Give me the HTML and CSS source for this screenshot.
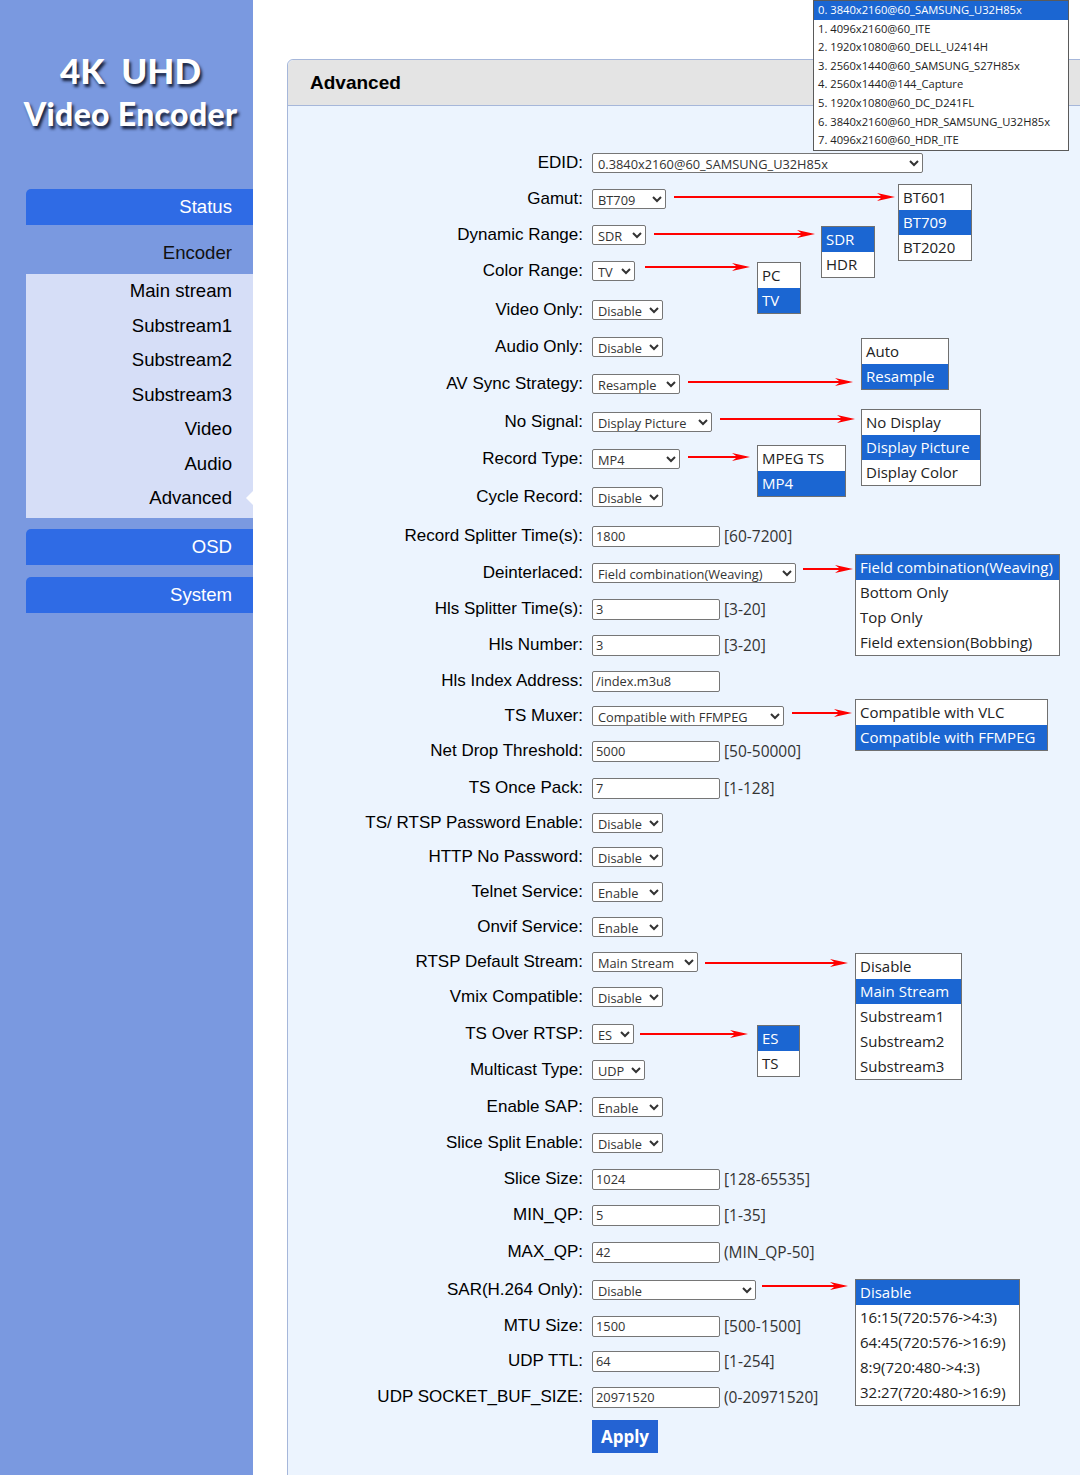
FILE: index.html
```html
<!DOCTYPE html>
<html lang="en">
  <head>
    <meta charset="UTF-8" />
    <meta name="viewport" content="width=device-width, initial-scale=1.0" />
    <title>4K UHD Video Encoder - Advanced</title>
    <link rel="stylesheet" href="styles.css">
  </head>

  <body>
    <aside class="sidebar">
      <div class="logo">
        <div class="logo-top">4K&nbsp;&nbsp;UHD</div>
        <div class="logo-bottom">Video Encoder</div>
      </div>
      <nav class="menu">
        <a class="menu-btn" href="#">Status</a>
        <a class="menu-group" href="#">Encoder</a>
        <ul class="submenu">
          <li>Main stream</li>
          <li>Substream1</li>
          <li>Substream2</li>
          <li>Substream3</li>
          <li>Video</li>
          <li>Audio</li>
          <li class="current">Advanced</li>
        </ul>
        <a class="menu-btn osd" href="#">OSD</a>
        <a class="menu-btn system" href="#">System</a>
      </nav>
    </aside>

    <main class="content">
      <section class="panel">
        <h2 class="panel-title">Advanced</h2>
        <form class="panel-body" onsubmit="return false">
          <div class="row">
            <label>EDID:</label>
            <select class="w331">
              <option selected>0.3840x2160@60_SAMSUNG_U32H85x</option>
              <option>1.4096x2160@60_ITE</option>
            </select>
          </div>
          <div class="row">
            <label>Gamut:</label>
            <select class="w74"><option>BT601</option><option selected>BT709</option><option>BT2020</option></select>
            <span class="arrow a-gamut"></span>
            <ul class="optlist l-gamut"><li>BT601</li><li class="sel">BT709</li><li>BT2020</li></ul>
          </div>
          <div class="row">
            <label>Dynamic Range:</label>
            <select class="w54"><option selected>SDR</option><option>HDR</option></select>
            <span class="arrow a-range"></span>
            <ul class="optlist l-range"><li class="sel">SDR</li><li>HDR</li></ul>
          </div>
          <div class="row p39">
            <label>Color Range:</label>
            <select class="w43"><option>PC</option><option selected>TV</option></select>
            <span class="arrow a-color"></span>
            <ul class="optlist l-color"><li>PC</li><li class="sel">TV</li></ul>
          </div>
          <div class="row p37">
            <label>Video Only:</label>
            <select class="w71"><option selected>Disable</option><option>Enable</option></select>
          </div>
          <div class="row p37">
            <label>Audio Only:</label>
            <select class="w71"><option selected>Disable</option><option>Enable</option></select>
          </div>
          <div class="row p38">
            <label>AV Sync Strategy:</label>
            <select class="w88"><option>Auto</option><option selected>Resample</option></select>
            <span class="arrow a-sync"></span>
            <ul class="optlist l-sync"><li>Auto</li><li class="sel">Resample</li></ul>
          </div>
          <div class="row p37">
            <label>No Signal:</label>
            <select class="w120"><option>No Display</option><option selected>Display Picture</option><option>Display Color</option></select>
            <span class="arrow a-signal"></span>
            <ul class="optlist l-signal"><li>No Display</li><li class="sel">Display Picture</li><li>Display Color</li></ul>
          </div>
          <div class="row p38">
            <label>Record Type:</label>
            <select class="w88"><option>MPEG TS</option><option selected>MP4</option></select>
            <span class="arrow a-record"></span>
            <ul class="optlist l-record"><li>MPEG TS</li><li class="sel">MP4</li></ul>
          </div>
          <div class="row p39">
            <label>Cycle Record:</label>
            <select class="w71"><option selected>Disable</option><option>Enable</option></select>
          </div>
          <div class="row p37">
            <label>Record Splitter Time(s):</label>
            <input type="text" value="1800" />
            <span class="hint">[60-7200]</span>
          </div>
          <div class="row">
            <label>Deinterlaced:</label>
            <select class="w204">
              <option selected>Field combination(Weaving)</option>
              <option>Bottom Only</option>
              <option>Top Only</option>
              <option>Field extension(Bobbing)</option>
            </select>
            <span class="arrow a-deint"></span>
            <ul class="optlist l-deint">
              <li class="sel">Field combination(Weaving)</li>
              <li>Bottom Only</li>
              <li>Top Only</li>
              <li>Field extension(Bobbing)</li>
            </ul>
          </div>
          <div class="row">
            <label>Hls Splitter Time(s):</label>
            <input type="text" value="3" />
            <span class="hint">[3-20]</span>
          </div>
          <div class="row">
            <label>Hls Number:</label>
            <input type="text" value="3" />
            <span class="hint">[3-20]</span>
          </div>
          <div class="row p35">
            <label>Hls Index Address:</label>
            <input type="text" value="/index.m3u8" />
          </div>
          <div class="row p35">
            <label>TS Muxer:</label>
            <select class="w192"><option>Compatible with VLC</option><option selected>Compatible with FFMPEG</option></select>
            <span class="arrow a-muxer"></span>
            <ul class="optlist l-muxer"><li>Compatible with VLC</li><li class="sel">Compatible with FFMPEG</li></ul>
          </div>
          <div class="row p37">
            <label>Net Drop Threshold:</label>
            <input type="text" value="5000" />
            <span class="hint">[50-50000]</span>
          </div>
          <div class="row p35">
            <label>TS Once Pack:</label>
            <input type="text" value="7" />
            <span class="hint">[1-128]</span>
          </div>
          <div class="row p34">
            <label>TS/ RTSP Password Enable:</label>
            <select class="w71"><option selected>Disable</option><option>Enable</option></select>
          </div>
          <div class="row p35">
            <label>HTTP No Password:</label>
            <select class="w71"><option selected>Disable</option><option>Enable</option></select>
          </div>
          <div class="row p35">
            <label>Telnet Service:</label>
            <select class="w71"><option>Disable</option><option selected>Enable</option></select>
          </div>
          <div class="row p35">
            <label>Onvif Service:</label>
            <select class="w71"><option>Disable</option><option selected>Enable</option></select>
          </div>
          <div class="row p35">
            <label>RTSP Default Stream:</label>
            <select class="w106">
              <option>Disable</option>
              <option selected>Main Stream</option>
              <option>Substream1</option>
              <option>Substream2</option>
              <option>Substream3</option>
            </select>
            <span class="arrow a-stream"></span>
            <ul class="optlist l-stream">
              <li>Disable</li>
              <li class="sel">Main Stream</li>
              <li>Substream1</li>
              <li>Substream2</li>
              <li>Substream3</li>
            </ul>
          </div>
          <div class="row p37">
            <label>Vmix Compatible:</label>
            <select class="w71"><option selected>Disable</option><option>Enable</option></select>
          </div>
          <div class="row">
            <label>TS Over RTSP:</label>
            <select class="w42"><option selected>ES</option><option>TS</option></select>
            <span class="arrow a-rtsp"></span>
            <ul class="optlist l-rtsp"><li class="sel">ES</li><li>TS</li></ul>
          </div>
          <div class="row p37">
            <label>Multicast Type:</label>
            <select class="w53"><option selected>UDP</option><option>RTP</option></select>
          </div>
          <div class="row">
            <label>Enable SAP:</label>
            <select class="w71"><option>Disable</option><option selected>Enable</option></select>
          </div>
          <div class="row">
            <label>Slice Split Enable:</label>
            <select class="w71"><option selected>Disable</option><option>Enable</option></select>
          </div>
          <div class="row">
            <label>Slice Size:</label>
            <input type="text" value="1024" />
            <span class="hint">[128-65535]</span>
          </div>
          <div class="row p37">
            <label>MIN_QP:</label>
            <input type="text" value="5" />
            <span class="hint">[1-35]</span>
          </div>
          <div class="row p38">
            <label>MAX_QP:</label>
            <input type="text" value="42" />
            <span class="hint">(MIN_QP-50]</span>
          </div>
          <div class="row">
            <label>SAR(H.264 Only):</label>
            <select class="w164">
              <option selected>Disable</option>
              <option>16:15(720:576-&gt;4:3)</option>
              <option>64:45(720:576-&gt;16:9)</option>
              <option>8:9(720:480-&gt;4:3)</option>
              <option>32:27(720:480-&gt;16:9)</option>
            </select>
            <span class="arrow a-sar"></span>
            <ul class="optlist l-sar">
              <li class="sel">Disable</li>
              <li>16:15(720:576-&gt;4:3)</li>
              <li>64:45(720:576-&gt;16:9)</li>
              <li>8:9(720:480-&gt;4:3)</li>
              <li>32:27(720:480-&gt;16:9)</li>
            </ul>
          </div>
          <div class="row p35">
            <label>MTU Size:</label>
            <input type="text" value="1500" />
            <span class="hint">[500-1500]</span>
          </div>
          <div class="row">
            <label>UDP TTL:</label>
            <input type="text" value="64" />
            <span class="hint">[1-254]</span>
          </div>
          <div class="row p34">
            <label>UDP SOCKET_BUF_SIZE:</label>
            <input type="text" value="20971520" />
            <span class="hint">(0-20971520]</span>
          </div>
          <div class="row actions">
            <label></label>
            <button class="apply" type="submit">Apply</button>
          </div>
        </form>
      </section>

      <!-- EDID list, opened -->
      <ul class="optlist edid-list">
        <li class="sel">0. 3840x2160@60_SAMSUNG_U32H85x</li>
        <li>1. 4096x2160@60_ITE</li>
        <li>2. 1920x1080@60_DELL_U2414H</li>
        <li>3. 2560x1440@60_SAMSUNG_S27H85x</li>
        <li>4. 2560x1440@144_Capture</li>
        <li>5. 1920x1080@60_DC_D241FL</li>
        <li>6. 3840x2160@60_HDR_SAMSUNG_U32H85x</li>
        <li>7. 4096x2160@60_HDR_ITE</li>
      </ul>
    </main>
  </body>
</html>
```

FILE: styles.css
```css
* {
  margin: 0;
  padding: 0;
  box-sizing: border-box;
}

html,
body {
  overflow: hidden;
}

body {
  display: flex;
  min-height: 1475px;
  background: #fff;
  font-family: "Liberation Sans", Arial, sans-serif;
  color: #000;
}

/* sidebar */

.sidebar {
  width: 253px;
  flex-shrink: 0;
  background: #7a99e0;
}

.logo {
  height: 189px;
  padding: 48px 0 0 8px;
  text-align: center;
  color: #fff;
  font-family: Lato, "Open Sans", sans-serif;
  font-weight: 900;
  text-shadow: 2px 3px 3px #17213b;
}

.logo-top {
  font-size: 35px;
  line-height: 45px;
}

.logo-bottom {
  font-size: 32px;
  line-height: 42px;
  letter-spacing: 0.3px;
}

.menu {
  margin-left: 26px;
}

.menu a {
  display: block;
  text-decoration: none;
  text-align: right;
  padding-right: 21px;
  font-size: 18.6px;
}

.menu-btn {
  height: 36px;
  line-height: 36px;
  background: #2f6be5;
  color: #fff;
  border-radius: 5px 0 0 0;
}

.menu-group {
  line-height: 36px;
  margin: 10px 0 3px;
  color: #111;
}

.submenu {
  list-style: none;
  background: #d6def7;
  padding-bottom: 2px;
  margin-bottom: 11px;
}

.submenu li {
  position: relative;
  height: 34.5px;
  line-height: 34.5px;
  text-align: right;
  padding-right: 21px;
  font-size: 18.6px;
}

.submenu li.current::after {
  content: "";
  position: absolute;
  right: 0;
  top: 10px;
  border-right: 7px solid #fff;
  border-top: 7px solid transparent;
  border-bottom: 7px solid transparent;
}

.menu-btn.system {
  margin-top: 12px;
}

/* content */

.content {
  position: relative;
  flex: 1;
  padding: 59px 0 0 34px;
}

.panel {
  width: 830px;
  min-height: 1420px;
  background: #ecf4fe;
  border: 1px solid #a6b7da;
  border-radius: 6px 0 0 0;
}

.panel-title {
  height: 46px;
  line-height: 46px;
  padding-left: 22px;
  font-size: 19px;
  font-weight: bold;
  background: #e4e4e4;
  border-bottom: 1px solid #a6b7da;
  border-radius: 6px 0 0 0;
}

.panel-body {
  padding-top: 45px;
}

.row {
  position: relative;
  display: flex;
  align-items: center;
  height: 24px;
  margin-bottom: 12px;
}

.row.p34 { margin-bottom: 10px; }
.row.p35 { margin-bottom: 11px; }
.row.p37 { margin-bottom: 13px; }
.row.p38 { margin-bottom: 14px; }
.row.p39 { margin-bottom: 15px; }

.row label {
  width: 295px;
  margin-right: 9px;
  text-align: right;
  font-size: 17px;
  color: #000;
}

select,
input {
  height: 20px;
  font-family: "Open Sans", sans-serif;
  font-size: 12.8px;
  color: #333;
  background: #fff;
  border: 1px solid #767676;
  border-radius: 2px;
}

select {
  padding-left: 1px;
}

input {
  width: 128px;
  height: 21px;
  padding: 0 3px;
}

.w42 { width: 42px; }
.w43 { width: 43px; }
.w53 { width: 53px; }
.w54 { width: 54px; }
.w71 { width: 71px; }
.w74 { width: 74px; }
.w88 { width: 88px; }
.w106 { width: 106px; }
.w120 { width: 120px; }
.w164 { width: 164px; }
.w192 { width: 192px; }
.w204 { width: 204px; }
.w331 { width: 331px; }

.hint {
  margin-left: 4px;
  font-family: "Open Sans", sans-serif;
  font-size: 15.5px;
  color: #333;
}

.actions {
  height: 34px;
}

.apply {
  width: 66px;
  height: 33px;
  border: none;
  background: #2463d3;
  color: #fff;
  font-family: "Open Sans", sans-serif;
  font-size: 17px;
  font-weight: bold;
  cursor: pointer;
}

/* red pointer arrows */

.arrow {
  position: absolute;
  height: 10px;
}

.arrow::before {
  content: "";
  position: absolute;
  left: 0;
  right: 12px;
  top: 4px;
  height: 2px;
  background: #f00;
}

.arrow::after {
  content: "";
  position: absolute;
  right: 0;
  top: 1px;
  width: 18px;
  height: 8px;
  background: #f00;
  clip-path: polygon(0 0, 100% 50%, 0 100%, 30% 50%);
}

.a-gamut { left: 386px; width: 221px; top: 5px; }
.a-range { left: 366px; width: 161px; top: 6px; }
.a-color { left: 357px; width: 105px; top: 3px; }
.a-sync { left: 400px; width: 165px; top: 5px; }
.a-signal { left: 432px; width: 135px; top: 4px; }
.a-record { left: 400px; width: 62px; top: 5px; }
.a-deint { left: 515px; width: 50px; top: 3px; }
.a-muxer { left: 504px; width: 60px; top: 4px; }
.a-stream { left: 417px; width: 143px; top: 8px; }
.a-rtsp { left: 352px; width: 108px; top: 7px; }
.a-sar { left: 474px; width: 86px; top: 3px; }

/* opened option lists */

.optlist {
  position: absolute;
  list-style: none;
  background: #fff;
  border: 1px solid #707070;
  font-family: "Open Sans", sans-serif;
  font-size: 15px;
  color: #222;
  z-index: 2;
}

.optlist li {
  height: 25px;
  line-height: 25px;
  padding-left: 4px;
  white-space: nowrap;
}

.optlist li.sel {
  background: #1b66d2;
  color: #fff;
}

.l-gamut { left: 610px; top: -3px; width: 74px; }
.l-range { left: 533px; top: 3px; width: 54px; }
.l-color { left: 469px; top: 3px; width: 44px; }
.l-sync { left: 573px; top: -34px; width: 88px; }
.l-signal { left: 573px; top: -1px; width: 120px; }
.l-record { left: 469px; top: -2px; width: 89px; }
.l-deint { left: 567px; top: -7px; width: 205px; }
.l-muxer { left: 567px; top: -5px; width: 193px; }
.l-stream { left: 567px; top: 3px; width: 107px; }
.l-rtsp { left: 469px; top: 3px; width: 43px; }
.l-sar { left: 567px; top: 1px; width: 165px; }

.edid-list {
  left: 560px;
  top: 0;
  width: 256px;
  border-color: #5a5a5a;
  font-size: 11.2px;
}

.edid-list li {
  height: 18.6px;
  line-height: 18.6px;
}
```
